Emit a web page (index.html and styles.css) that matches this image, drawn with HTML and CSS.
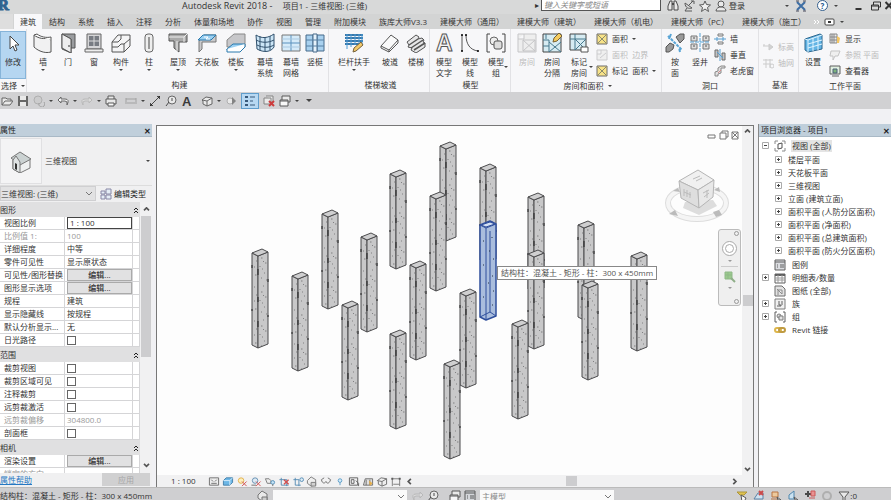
FILE: index.html
```html
<!DOCTYPE html>
<html lang="zh-CN">
<head>
<meta charset="utf-8">
<title>Autodesk Revit 2018 - 项目1 - 三维视图: (三维)</title>
<link rel="stylesheet" href="styles.css">
</head>
<body>
<svg class="sprite" aria-hidden="true">
  <defs>
    <pattern id="speck" width="16" height="34" patternUnits="userSpaceOnUse">
      <rect width="16" height="34" fill="#c8c8c9"/>
      <path d="M2 4h1M11 3h1M9 9h1.500M4 12h1M13 14h1.500M2 18h1M10 20h1M12 24h1M3 26h1.500M9 29h1M14 31h1M11 12l1 1M8 17v1" stroke="#808082" stroke-width="1"/>
    </pattern>
    <g id="col" stroke="#4b4b4d" stroke-linejoin="round">
      <path d="M0 4 6 7V99L0 96Z" fill="url(#speck)"/>
      <path d="M6 7 16 3V95L6 99Z" fill="url(#speck)"/>
      <path d="M0 4 10 0 16 3 6 7Z" fill="#cfcfd0"/>
      <path d="M0 16v3M0 60v2M6 20v6M6 48v5M6 72v6M16 30v3M16 66v2" stroke="#222" stroke-width="1"/>
    </g>
    <symbol id="cursor" viewBox="0 0 20 20"><path d="M7 3v13l3-3 2 5 2-1-2-5h4z" fill="#fff" stroke="#444"/></symbol>
    <symbol id="wall" viewBox="0 0 20 20"><path d="M1 2c5 4 11 4 14 3l3 2v12C11 21 4 17 1 14z" fill="#f1f1f2" stroke="#555"/><path d="M1 2l3-1c4 3 9 4 14 3v3" fill="#fff" stroke="#555"/></symbol>
    <symbol id="door" viewBox="0 0 20 20"><path d="M4 1h13v14h-4M4 1v15l9 4V6z" fill="#9a9c9f" stroke="#555"/><path d="M4 1l9 5v14l-9-5z" fill="#ededee" stroke="#555"/><path d="M11 12v2" stroke="#333"/></symbol>
    <symbol id="window" viewBox="0 0 20 20"><path d="M3 1h14v15H3z" fill="#d5d5d7" stroke="#666"/><path d="M5 3h10v10H5z" fill="#777b82"/><path d="M10 3v10M5 8h10" stroke="#ddd"/><path d="M1 16h18v3H1z" fill="#eee" stroke="#666"/></symbol>
    <symbol id="part" viewBox="0 0 20 20"><path d="M1 9l6-7h12v11l-6 6H1z" fill="#f4f4f5" stroke="#555"/><path d="M1 9h6l3-3V2M13 19v-8h-3l-3 3H1M13 11l6-5" fill="none" stroke="#555"/></symbol>
    <symbol id="pillar" viewBox="0 0 20 20"><rect x="6" y="1" width="8" height="18" rx="3" fill="#eee" stroke="#666"/><path d="M10 4v12" stroke="#999" stroke-width="2"/></symbol>
    <symbol id="roof" viewBox="0 0 20 20"><path d="M1 1h18v8h-8v10l-5-4V8H1z" fill="#aaa" stroke="#555"/><path d="M1 4h15l3-3M16 4v5M9 8v10" fill="none" stroke="#eee"/></symbol>
    <symbol id="ceiling" viewBox="0 0 20 20"><path d="M2 8v11l3-3V9h14V2H7z" fill="#c9c9cb" stroke="#777"/><path d="M1 7l5-5h13l-5 5z" fill="#9bd0f2" stroke="#2879ad"/><path d="M7 4h4l-2 2h4" stroke="#fff" fill="none"/></symbol>
    <symbol id="floor" viewBox="0 0 20 20"><path d="M1 7l7-6h11v13H1z" fill="#c7c7ca" stroke="#888"/><path d="M1 16l6-5h12l-5 6H1z" fill="#9bd0f2" stroke="#2879ad"/><path d="M1 16v3h13l5-5v-3" fill="#fff" stroke="#2879ad"/></symbol>
    <symbol id="curtain" viewBox="0 0 20 20"><path d="M1 2c6 4 12 3 18-1v13c-3 5-10 6-17 2z" fill="#cce6f7" stroke="#31516d"/><path d="M5 3v15M10 4v15M15 3v14M1 7c6 3 12 3 18 0M2 12c6 3 12 3 17 0" fill="none" stroke="#31516d"/></symbol>
    <symbol id="grid" viewBox="0 0 20 20"><path d="M1 2h18v16H1z" fill="#d6ebf9" stroke="#777"/><path d="M10 2v16M1 10h18" stroke="#5a91bd"/><path d="M1 6h18M1 14h18" stroke="#a9c9e2"/></symbol>
    <symbol id="mullion" viewBox="0 0 20 20"><path d="M1 2h7v16H1zM12 2h7v16h-7z" fill="#a9d1ef" stroke="#466b8b"/><path d="M8 1h4v18H8z" fill="#e6f2fb" stroke="#466b8b"/><path d="M1 7h18M1 13h18" stroke="#5680a4" stroke-width="1"/></symbol>
    <symbol id="rail" viewBox="0 0 20 20"><path d="M1 2h18M1 5h18M1 8h18M1 11h14" stroke="#3778ab" stroke-width="2"/><path d="M3 1v15M7 1v13M11 1v11M15 1v10M18 1v10" stroke="#4d9bd5"/><path d="M9 19l1-4 7-6 2 3-7 6z" fill="#f3c969" stroke="#75613c"/></symbol>
    <symbol id="ramp" viewBox="0 0 20 20"><path d="M1 13L11 2l7 5v3L9 19l-8-4z" fill="#fafafa" stroke="#555"/><path d="M1 13l8 4 9-10M9 17v2" fill="none" stroke="#555"/></symbol>
    <symbol id="stair" viewBox="0 0 20 20"><path d="M1 9l9-7 3 2-1 2 4-1 2 2-1 2 2 1v4l-9 6-5-3 1-2-4-1 1-2z" fill="#e6e6e7" stroke="#555"/><path d="M3 12l9-6M5 15l12-8M8 17l11-7" stroke="#555" stroke-width="1.500"/></symbol>
    <symbol id="mtext" viewBox="0 0 20 20"><text x="2" y="18" font-family="Liberation Sans" font-weight="bold" font-size="23" fill="#f4f4f4" stroke="#555">A</text></symbol>
    <symbol id="mline" viewBox="0 0 20 20"><path d="M2 2v16M6 2c0 9 4 15 12 16" fill="none" stroke="#555"/><circle cx="2" cy="2" r="1"/><circle cx="2" cy="18" r="1"/><circle cx="6" cy="2" r="1"/><circle cx="18" cy="18" r="1"/></symbol>
    <symbol id="mgroup" viewBox="0 0 20 20"><path d="M4 1H1v18h3M16 1h3v18h-3" fill="none" stroke="#444"/><circle cx="8" cy="8" r="4" fill="#eee" stroke="#666"/><rect x="8" y="8" width="8" height="8" rx="2" fill="#ddd" stroke="#555"/></symbol>
    <symbol id="room" viewBox="0 0 20 20"><path d="M1 1h18v18H1zM1 6h6V1M6 7h12v11H6zl12 11M18 7L6 18" fill="#eee" stroke="#c5c5c7"/></symbol>
    <symbol id="roomsep" viewBox="0 0 20 20"><path d="M1 1h18v18H1z" fill="#d6ebf2" stroke="#444"/><path d="M1 7h6M4 1v5M1 13h6v6M7 7v6M7 9l12 10M19 9L7 19" fill="none" stroke="#47788d"/><path d="M11 9l1-4 5-5 3 3-5 5z" fill="#f4cb5f" stroke="#776033"/></symbol>
    <symbol id="roomtag" viewBox="0 0 20 20"><path d="M1 1h16v16H1z" fill="#d6ebf2" stroke="#444"/><path d="M1 6h5V1M6 6h11M6 6v11M6 6l11 11M17 6L6 17" fill="none" stroke="#47788d"/><path d="M12 14h7v5h-7z" fill="#fff" stroke="#555"/></symbol>
    <symbol id="area" viewBox="0 0 12 12"><path d="M1 1h10v10H1z" fill="#f8df75" stroke="#555"/><path d="M2 2l8 8M10 2l-8 8" stroke="#775" /></symbol>
    <symbol id="areab" viewBox="0 0 12 12"><path d="M1 1h10v10H1zM1 5h4V1M4 9l6-5" fill="#eee" stroke="#c5c5c7"/></symbol>
    <symbol id="byface" viewBox="0 0 20 20"><path d="M3 3l14 14M6 1l-2 5M15 19l-1-4" stroke="#58a4d5" stroke-width="2" stroke-dasharray="3 1"/><path d="M11 4l4-3h4v5l-4 4zM1 14l4-4 4 2-1 4-4 3H1z" fill="#999" stroke="#555"/></symbol>
    <symbol id="shaft" viewBox="0 0 20 20"><path d="M1 3h6v5H1zM1 11h6v5H1zM13 3h6v5h-6zM13 11h6v5h-6z" fill="#ddd" stroke="#777"/><path d="M3 5h2M3 13h2M15 5h2M15 13h2" stroke="#555"/><path d="M10 0v20M0 9h20" stroke="#56a3d6" stroke-dasharray="4 1"/></symbol>
    <symbol id="owall" viewBox="0 0 12 12"><path d="M4 1h5v2H4zM4 9h5v2H4z" fill="#eee" stroke="#666"/><path d="M0 6h12M3 4v4M9 4v4" stroke="#3b8fc9"/></symbol>
    <symbol id="overt" viewBox="0 0 12 12"><path d="M1 1h3v7H1zM8 4h3v7H8z" fill="#bbb" stroke="#555"/><path d="M6 0v12M3 3l6 6" stroke="#3b8fc9"/></symbol>
    <symbol id="dormer" viewBox="0 0 12 12"><path d="M1 11V7l3-1V3l3-2h4v2H7v5l-3 1v2z" fill="#ddd" stroke="#777"/><path d="M7 5L4 8" stroke="#c77"/></symbol>
    <symbol id="level" viewBox="0 0 12 12"><path d="M1 5h6M7 3l4 3-4 3zM2 3v2" fill="#ccc" stroke="#c5c5c5"/></symbol>
    <symbol id="axis" viewBox="0 0 12 12"><path d="M1 3h10M1 7h8M4 2v9M8 2v9" stroke="#c5c5c5"/><circle cx="10" cy="9" r="2" fill="none" stroke="#c5c5c5"/></symbol>
    <symbol id="setplane" viewBox="0 0 20 20"><path d="M2 6l15-5 2 1v14L5 19l-3-2z" fill="#63b4e4" stroke="#2c668e"/><path d="M5 7l14-5M5 7v12M10 5v13M15 4v13M5 11l14-4M5 15l14-4M2 6l3 1" fill="none" stroke="#e0f4ff"/></symbol>
    <symbol id="show" viewBox="0 0 12 12"><path d="M1 1h7v9H1zM3 1v9M5 1v9M1 4h7M1 7h7" fill="#e9e9e9" stroke="#777"/><path d="M8 3l3 2-1 5H8z" fill="#f3bd48"/></symbol>
    <symbol id="refp" viewBox="0 0 12 12"><path d="M2 2h9L9 7H6l-2 4V7H1z" fill="#eee" stroke="#bbb"/></symbol>
    <symbol id="viewer" viewBox="0 0 12 12"><path d="M1 1h10v8H1zM3 11h7" fill="#dcefdc" stroke="#444"/><path d="M4 8V4h4v4z" fill="#67a866" stroke="#346"/></symbol>
    <symbol id="open" viewBox="0 0 12 12"><path d="M1 10V3h4l1 1h4v2M1 10l3-4h8l-3 4z" fill="#eee" stroke="#555"/></symbol>
    <symbol id="save" viewBox="0 0 12 12"><path d="M1 1h10v10H1z" fill="#555"/><path d="M3 1h6v4H3zM3 7h6v4H3z" fill="#eee"/></symbol>
    <symbol id="sync" viewBox="0 0 12 12"><circle cx="5" cy="5" r="4" fill="#ccc" stroke="#aaa"/><path d="M6 8a3 3 0 105-1" fill="none" stroke="#999"/></symbol>
    <symbol id="undo" viewBox="0 0 12 12"><path d="M4 2L1 5l3 3V6h4q3 0 2 4 3-6-2-6H4z" fill="#fff" stroke="#555"/></symbol>
    <symbol id="redo" viewBox="0 0 12 12"><path d="M8 2l3 3-3 3V6H4q-3 0-2 4-3-6 2-6h4z" fill="#ddd" stroke="#b5b5b5"/></symbol>
    <symbol id="print" viewBox="0 0 12 12"><path d="M3 4V1h6v3M1 4h10v5H1z" fill="#eee" stroke="#444"/><path d="M3 8h6v3H3z" fill="#fff" stroke="#444"/></symbol>
    <symbol id="measure" viewBox="0 0 12 12"><path d="M1 3v6M11 3v6M1 4h10M2 8h8" stroke="#999"/></symbol>
    <symbol id="dim" viewBox="0 0 12 12"><path d="M1 11L11 1M1 8l3 3M8 1l3 3" stroke="#333"/><circle cx="2" cy="10" r="1"/><circle cx="10" cy="2" r="1"/></symbol>
    <symbol id="tag" viewBox="0 0 12 12"><circle cx="7" cy="5" r="4" fill="#eee" stroke="#555"/><path d="M1 11l3-4M7 3v3" stroke="#333"/></symbol>
    <symbol id="atext" viewBox="0 0 12 12"><text x="1" y="11" font-family="Liberation Sans" font-weight="bold" font-size="13" fill="#222">A</text></symbol>
    <symbol id="home" viewBox="0 0 12 12"><path d="M1 5l4-3 6 1v6l-5 2-4-2V6z" fill="#eee" stroke="#555"/><path d="M1 5l5 1 5-3M6 6v5" fill="none" stroke="#555"/></symbol>
    <symbol id="sect" viewBox="0 0 12 12"><circle cx="5" cy="6" r="3" fill="#eee" stroke="#aaa"/><path d="M7 2l4 4-4 4z" fill="#777"/></symbol>
    <symbol id="thin" viewBox="0 0 12 12"><path d="M1 2h3M1 6h3M1 10h3" stroke="#246" stroke-width="2"/><path d="M6 2h5M6 6h3M6 10h5" stroke="#246"/></symbol>
    <symbol id="closeh" viewBox="0 0 12 12"><path d="M1 3h7v6H1zM3 1h7v6" fill="#eee" stroke="#777"/><path d="M6 6l5 5M11 6l-5 5" stroke="#c22" stroke-width="2"/></symbol>
    <symbol id="switch" viewBox="0 0 12 12"><path d="M3 1h8v6H3z" fill="#eee" stroke="#444"/><path d="M1 5h8v6H1zM1 6h8" fill="#fff" stroke="#444"/></symbol>
    <symbol id="bino" viewBox="0 0 12 12"><path d="M1 10V6l2-5h2v9zM7 10V1h2l2 5v4z" fill="#eee" stroke="#333"/><path d="M5 4h2" stroke="#333" stroke-width="2"/></symbol>
    <symbol id="dish" viewBox="0 0 12 12"><path d="M2 3c0 5 4 6 7 5zM4 8l-2 3h7M6 5l4-4M8 1h3v3" fill="none" stroke="#444"/></symbol>
    <symbol id="star" viewBox="0 0 12 12"><path d="M6 1l1.500 3.500 4 .5-3 2.500 1 4L6 9l-3.500 2.500 1-4-3-2.500 4-.5z" fill="#f4f4f4" stroke="#444"/></symbol>
    <symbol id="user" viewBox="0 0 12 12"><circle cx="6" cy="4" r="3" fill="#eee" stroke="#444"/><path d="M1 11c0-3 3-4 5-4s5 1 5 4z" fill="#eee" stroke="#444"/></symbol>
    <symbol id="xch" viewBox="0 0 12 12"><path d="M2 2l8 8M10 2l-8 8" stroke="#235c9b" stroke-width="2"/><path d="M1 1h3M8 1h3M1 11h3M8 11h3" stroke="#334"/></symbol>
    <symbol id="plus" viewBox="0 0 7 7"><path d="M.5.5h6v6h-6z" fill="#fff" stroke="#aaa"/><path d="M2 3.500h3M3.500 2v3" stroke="#444"/></symbol>
    <symbol id="minus" viewBox="0 0 7 7"><path d="M.5.5h6v6h-6z" fill="#fff" stroke="#aaa"/><path d="M2 3.500h3" stroke="#444"/></symbol>
    <symbol id="tviews" viewBox="0 0 12 12"><path d="M1 4V1h3M8 1h3v3M11 8v3H8M4 11H1V8" fill="none" stroke="#777"/><path d="M4 4l4-1v5l-4 1z" fill="#fff" stroke="#333"/></symbol>
    <symbol id="tleg" viewBox="0 0 12 12"><path d="M1 1h10v10H1z" fill="#d5d8dc" stroke="#444"/><path d="M1 3h10M3 6h1M6 6h4M3 8h1M6 8h4" stroke="#444"/></symbol>
    <symbol id="tsched" viewBox="0 0 12 12"><path d="M1 2h10v9H1z" fill="#fff" stroke="#444"/><path d="M1 3h10" stroke="#444" stroke-width="2"/><path d="M1 6h10M1 8h10M4 3v8M8 3v8" stroke="#888"/></symbol>
    <symbol id="tsheet" viewBox="0 0 12 12"><path d="M1 1h7l3 3v7H1z" fill="#ddd" stroke="#555"/><path d="M3 4l5 5V5H4v5" fill="#eee" stroke="#777"/></symbol>
    <symbol id="tfam" viewBox="0 0 12 12"><path d="M1 1h10v10H1z" fill="#eee" stroke="#666"/><path d="M3 8h4V7H5V3M8 3v4" fill="none" stroke="#444"/></symbol>
    <symbol id="tgrp" viewBox="0 0 12 12"><path d="M3 1H1v10h2M9 1h2v10H9" fill="none" stroke="#444"/><circle cx="5" cy="5" r="2" fill="#ddd" stroke="#666"/><path d="M5 5h4v4H5z" fill="#ddd" stroke="#666"/></symbol>
    <symbol id="tlink" viewBox="0 0 12 12"><rect x="1" y="4" width="6" height="4" rx="2" fill="none" stroke="#d8aa2e" stroke-width="2"/><rect x="5" y="4" width="6" height="4" rx="2" fill="none" stroke="#b58a22" stroke-width="2"/></symbol>
    <symbol id="house" viewBox="0 0 24 24"><path d="M4 11v9l7 4 10-5v-8L12 4z" fill="#eef0f0" stroke="#777"/><path d="M2 9l9-6 11 7-11 6z" fill="#cbd2d2" stroke="#777"/><path d="M4 11l3-4 4 6v11l-7-4z" fill="#dfe3e3" stroke="#777"/><path d="M6 14l2 1v6l-2-1z" fill="#333"/></symbol>
    <symbol id="etype" viewBox="0 0 12 12"><path d="M1 3h4v3H1zM6 1h5v5H6zM1 7h4v4H1zM6 7h5v4H6z" fill="#e2edf6" stroke="#779"/></symbol>
    <symbol id="up2" viewBox="0 0 7 8"><path d="M1 4l2-2 2 2M1 7l2-2 2 2" fill="none" stroke="#222"/></symbol>
    <symbol id="vdetail" viewBox="0 0 12 12"><path d="M1 2h10v8H1zM3 4l2 2M9 4L7 6M3 8h6" fill="#eee" stroke="#555"/></symbol>
    <symbol id="vstyle" viewBox="0 0 12 12"><path d="M1 5l3-3h7v5L8 10H1z" fill="#56aee5" stroke="#256b9c"/><path d="M1 5h7v5M8 5l3-3" fill="none" stroke="#d8f0ff"/></symbol>
    <symbol id="vsun" viewBox="0 0 12 12"><circle cx="5" cy="5" r="3" fill="#fff0b5" stroke="#e0a32c"/><path d="M6 6l5 5M11 6l-5 5" stroke="#c33"/></symbol>
    <symbol id="vshadow" viewBox="0 0 12 12"><circle cx="5" cy="5" r="3" fill="#dcebf6" stroke="#4a7da5"/><path d="M1 10h5" stroke="#555"/><path d="M6 6l5 5M11 6l-5 5" stroke="#c33"/></symbol>
    <symbol id="vrender" viewBox="0 0 12 12"><path d="M1 3h4l2 2v3H3z" fill="#eee" stroke="#666"/><circle cx="9" cy="7" r="2" fill="#bde0f6" stroke="#397fae"/><path d="M9 9v2" stroke="#555"/></symbol>
    <symbol id="vcropx" viewBox="0 0 12 12"><path d="M3 2v8h8M1 4h8v7" fill="none" stroke="#397aa8"/><path d="M6 4l5 5M11 4l-5 5" stroke="#c33" stroke-width="1.500"/></symbol>
    <symbol id="vcrop" viewBox="0 0 12 12"><path d="M3 2v8h6M1 4h6v7" fill="none" stroke="#397aa8"/><circle cx="10" cy="4" r="2" fill="#d9ecf8" stroke="#397aa8"/></symbol>
    <symbol id="vlock" viewBox="0 0 12 12"><path d="M1 5l4-4 5 3v6l-5 1-4-3z" fill="#eee" stroke="#666"/><path d="M5 7h5v4H5z" fill="#ccc" stroke="#666"/></symbol>
    <symbol id="vhide" viewBox="0 0 12 12"><path d="M1 4c1 5 4 4 5 2 1 3 4 2 5-2M1 4l3-2M11 4L8 2" fill="none" stroke="#555"/></symbol>
    <symbol id="vbulb" viewBox="0 0 12 12"><circle cx="6" cy="5" r="2" fill="#d3ecfb" stroke="#3d8cc1"/><path d="M6 7v3" stroke="#3d8cc1"/></symbol>
    <symbol id="vtemp" viewBox="0 0 12 12"><path d="M1 2h9v8H1zM3 4h3v4H3zM8 5l3 3v3" fill="none" stroke="#444"/></symbol>
    <symbol id="vanal" viewBox="0 0 12 12"><path d="M1 10l2-7h8v7zM4 4v6M8 4v6" fill="#ddd" stroke="#555"/><path d="M7 5l4 3-3 3z" fill="#e7a52e"/></symbol>
    <symbol id="vcons" viewBox="0 0 12 12"><path d="M2 3v8M10 3v8M1 3h10M3 9h7" stroke="#666" fill="none"/><path d="M1 2h2v2H1zM9 2h2v2H9z" fill="#444"/></symbol>
    <symbol id="shand" viewBox="0 0 12 12"><path d="M1 2h10L8 5H4z" fill="#e4c33b" stroke="#a78a21"/><path d="M5 5l5 3-2 4H6z" fill="#fff" stroke="#444"/></symbol>
    <symbol id="slink" viewBox="0 0 12 12"><path d="M1 9l4-6h5v6z" fill="#cfe5f5" stroke="#4977a0"/><path d="M6 1l4 4M10 1L6 5" stroke="#c33" stroke-width="2"/></symbol>
    <symbol id="spin" viewBox="0 0 12 12"><path d="M2 2h6v5H2zM1 9h8" fill="#f3c993" stroke="#b5652a"/><path d="M7 7l4 3H8z" fill="#fff" stroke="#444"/></symbol>
    <symbol id="sface" viewBox="0 0 12 12"><path d="M2 9V5l5-4v8z" fill="#cbe6f7" stroke="#397aa8"/><path d="M7 7l4 3H8z" fill="#fff" stroke="#444"/></symbol>
    <symbol id="sdrag" viewBox="0 0 12 12"><path d="M1 4h6M4 1v6" stroke="#333" stroke-width="2"/><path d="M7 1h4v5H7zM5 8h6" stroke="#c44" fill="#e88"/></symbol>
    <symbol id="sgear" viewBox="0 0 12 12"><circle cx="6" cy="6" r="4" fill="none" stroke="#aaa" stroke-width="2"/></symbol>
    <symbol id="sfilter" viewBox="0 0 12 12"><path d="M1 2h10L7 7v4H5V7z" fill="#eee" stroke="#444"/></symbol>
  </defs>
</svg>

<header class="titlebar">
  <svg class="logo" viewBox="0 0 12 13" aria-label="Revit"><text x="-2" y="10" font-family="Liberation Serif" font-weight="bold" font-size="15" fill="#2f6290" stroke="#2f6290">R</text></svg>
  <h1 class="app-title">Autodesk Revit 2018 - <span>项目1 - 三维视图: (三维)</span></h1>
  <span class="title-arrow">▸</span>
  <input class="search" type="text" placeholder="键入关键字或短语" aria-label="搜索">
  <div class="account">
    <svg class="i12"><use href="#bino"/></svg><svg class="i12"><use href="#dish"/></svg><svg class="i12"><use href="#star"/></svg><svg class="i12"><use href="#user"/></svg>
    <button class="plain">登录</button>
  </div>
  <div class="helpers"><i class="caret"></i><svg class="i12"><use href="#xch"/></svg><button class="help" aria-label="帮助">?</button><i class="caret"></i></div>
  <div class="wincontrols"><svg viewBox="0 0 36 12"><path d="M1 9h6" stroke="#333" stroke-width="2"/><path d="M17 5h7v5h-7zM19 5V2h7v5h-2M17 6h7" fill="none" stroke="#333"/><path d="M31 2l7 7M38 2l-7 7" stroke="#333" stroke-width="2"/></svg></div>
</header>

<nav class="tabs">
  <button class="tab file" aria-label="文件"></button>
  <button class="tab active">建筑</button><button class="tab">结构</button><button class="tab">系统</button><button class="tab">插入</button><button class="tab">注释</button><button class="tab">分析</button><button class="tab">体量和场地</button><button class="tab">协作</button><button class="tab">视图</button><button class="tab">管理</button><button class="tab">附加模块</button><button class="tab">族库大师V3.3</button><button class="tab">建模大师（通用）</button><button class="tab">建模大师（建筑）</button><button class="tab">建模大师（机电）</button><button class="tab">建模大师（PC）</button><button class="tab">建模大师（施工）</button>
  <svg class="tabend" viewBox="0 0 26 10"><path d="M1 3l2 2-2 2M4 3l2 2-2 2" fill="none" stroke="#fff"/><rect x="12" y="2" width="9" height="6" rx="1" fill="#fff" stroke="#444"/><path d="M15 5h3" stroke="#333" stroke-width="2"/></svg><i class="caret"></i>
</nav>

<section class="ribbon">
  <div class="group g-select">
    <div class="tools"><button class="tool t24 selected"><svg><use href="#cursor"/></svg>修改</button></div>
    <div class="gname">选择 <i class="caret"></i></div>
  </div>
  <div class="group g-build">
    <div class="tools">
      <button class="tool t24"><svg><use href="#wall"/></svg>墙<i class="caret"></i></button>
      <button class="tool t26"><svg><use href="#door"/></svg>门</button>
      <button class="tool t26"><svg><use href="#window"/></svg>窗</button>
      <button class="tool t28"><svg><use href="#part"/></svg>构件<i class="caret"></i></button>
      <button class="tool t28"><svg><use href="#pillar"/></svg>柱<i class="caret"></i></button>
      <button class="tool t30"><svg><use href="#roof"/></svg>屋顶<i class="caret"></i></button>
      <button class="tool t28"><svg><use href="#ceiling"/></svg>天花板</button>
      <button class="tool t30"><svg><use href="#floor"/></svg>楼板<i class="caret"></i></button>
      <button class="tool t28"><svg><use href="#curtain"/></svg>幕墙<br>系统</button>
      <button class="tool t24"><svg><use href="#grid"/></svg>幕墙<br>网格</button>
      <button class="tool t24"><svg><use href="#mullion"/></svg>竖梃</button>
    </div>
    <div class="gname">构建</div>
  </div>
  <div class="group g-stair">
    <div class="tools">
      <button class="tool t44"><svg><use href="#rail"/></svg>栏杆扶手<i class="caret"></i></button>
      <button class="tool t28"><svg><use href="#ramp"/></svg>坡道</button>
      <button class="tool t24"><svg><use href="#stair"/></svg>楼梯</button>
    </div>
    <div class="gname">楼梯坡道</div>
  </div>
  <div class="group g-model">
    <div class="tools">
      <button class="tool t26"><svg><use href="#mtext"/></svg>模型<br>文字</button>
      <button class="tool t26"><svg><use href="#mline"/></svg>模型<br>线</button>
      <button class="tool t26 side"><svg><use href="#mgroup"/></svg>模型<br>组<i class="caret"></i></button>
    </div>
    <div class="gname">模型</div>
  </div>
  <div class="group g-room">
    <div class="tools">
      <button class="tool t26" disabled><svg><use href="#room"/></svg>房间</button>
      <button class="tool t24"><svg><use href="#roomsep"/></svg>房间<br>分隔</button>
      <button class="tool t30 side"><svg><use href="#roomtag"/></svg>标记<br>房间<i class="caret"></i></button>
      <div class="stack">
        <button><svg class="i12"><use href="#area"/></svg>面积 <i class="caret"></i></button>
        <button disabled><svg class="i12"><use href="#areab"/></svg>面积&nbsp; 边界</button>
        <button><svg class="i12"><use href="#area"/></svg>标记&nbsp; 面积 <i class="caret"></i></button>
      </div>
    </div>
    <div class="gname">房间和面积 <i class="caret"></i></div>
  </div>
  <div class="group g-open">
    <div class="tools">
      <button class="tool t26"><svg><use href="#byface"/></svg>按<br>面</button>
      <button class="tool t24"><svg><use href="#shaft"/></svg>竖井</button>
      <div class="stack">
        <button><svg class="i12"><use href="#owall"/></svg>墙</button>
        <button><svg class="i12"><use href="#overt"/></svg>垂直</button>
        <button><svg class="i12"><use href="#dormer"/></svg>老虎窗</button>
      </div>
    </div>
    <div class="gname">洞口</div>
  </div>
  <div class="group g-datum">
    <div class="tools"><div class="stack middle">
      <button disabled><svg class="i12"><use href="#level"/></svg>标高</button>
      <button disabled><svg class="i12"><use href="#axis"/></svg>轴网</button>
    </div></div>
    <div class="gname">基准</div>
  </div>
  <div class="group g-plane">
    <div class="tools">
      <button class="tool t28"><svg><use href="#setplane"/></svg>设置</button>
      <div class="stack">
        <button><svg class="i12"><use href="#show"/></svg>显示</button>
        <button disabled><svg class="i12"><use href="#refp"/></svg>参照 平面</button>
        <button><svg class="i12"><use href="#viewer"/></svg>查看器</button>
      </div>
    </div>
    <div class="gname">工作平面</div>
  </div>
</section>

<div class="qat">
  <svg class="i12"><use href="#open"/></svg><svg class="i12"><use href="#save"/></svg><svg class="i12"><use href="#sync"/></svg><i class="caret"></i>
  <svg class="i12"><use href="#undo"/></svg><i class="caret"></i><svg class="i12"><use href="#redo"/></svg><i class="caret"></i>
  <svg class="i12"><use href="#print"/></svg><svg class="i12 wide"><use href="#measure"/></svg><i class="caret"></i>
  <svg class="i12"><use href="#dim"/></svg><svg class="i12"><use href="#tag"/></svg><svg class="i12"><use href="#atext"/></svg><svg class="i12 wide"><use href="#home"/></svg><i class="caret"></i>
  <svg class="i12"><use href="#sect"/></svg><span class="on"><svg class="i12"><use href="#thin"/></svg></span><svg class="i12"><use href="#closeh"/></svg><svg class="i12"><use href="#switch"/></svg><i class="caret"></i><i class="caret big"></i>
</div>

<main class="work">
  <aside class="props">
    <div class="phead">属性<button class="x" aria-label="关闭">✕</button></div>
    <div class="ptype"><span class="thumb"><svg><use href="#house"/></svg></span><span>三维视图</span><i class="caret"></i></div>
    <div class="pselect">
      <select aria-label="视图"><option>三维视图: (三维)</option></select>
      <button><svg class="i12"><use href="#etype"/></svg>编辑类型</button>
    </div>
    <div class="pgrid">
      <div class="ptable">
      <table>
        <colgroup><col><col class="cv"><col class="ce"></colgroup>
        <tbody>
        <tr class="sec"><th colspan="2">图形</th><th><svg><use href="#up2"/></svg></th></tr>
        <tr><td><label for="sc">视图比例</label></td><td><input id="sc" class="field" type="text" value="1 : 100"></td><td></td></tr>
        <tr class="dim"><td>比例值 1:</td><td>100</td><td></td></tr>
        <tr><td>详细程度</td><td>中等</td><td></td></tr>
        <tr><td>零件可见性</td><td>显示原状态</td><td></td></tr>
        <tr><td>可见性/图形替换</td><td><button class="edit">编辑...</button></td><td></td></tr>
        <tr><td>图形显示选项</td><td><button class="edit">编辑...</button></td><td></td></tr>
        <tr><td>规程</td><td>建筑</td><td></td></tr>
        <tr><td>显示隐藏线</td><td>按规程</td><td></td></tr>
        <tr><td>默认分析显示...</td><td>无</td><td></td></tr>
        <tr><td><label for="c1">日光路径</label></td><td><input id="c1" type="checkbox"></td><td></td></tr>
        <tr class="sec"><th colspan="2">范围</th><th><svg><use href="#up2"/></svg></th></tr>
        <tr><td><label for="c2">裁剪视图</label></td><td><input id="c2" type="checkbox"></td><td></td></tr>
        <tr><td><label for="c3">裁剪区域可见</label></td><td><input id="c3" type="checkbox"></td><td></td></tr>
        <tr><td><label for="c4">注释裁剪</label></td><td><input id="c4" type="checkbox"></td><td></td></tr>
        <tr><td><label for="c5">远剪裁激活</label></td><td><input id="c5" type="checkbox"></td><td></td></tr>
        <tr class="dim"><td>远剪裁偏移</td><td>304800.0</td><td></td></tr>
        <tr><td><label for="c6">剖面框</label></td><td><input id="c6" type="checkbox"></td><td></td></tr>
        <tr class="sec"><th colspan="2">相机</th><th><svg><use href="#up2"/></svg></th></tr>
        <tr><td>渲染设置</td><td><button class="edit">编辑...</button></td><td></td></tr>
        <tr class="dim"><td>锁定的方向</td><td></td><td></td></tr>
        </tbody>
      </table>
      </div>
      <div class="vscroll"><svg viewBox="0 0 8 6"><path d="M1 4l3-3 3 3" /></svg><span class="thumb-props"></span><svg viewBox="0 0 8 6"><path d="M1 1l3 3 3-3"/></svg></div>
    </div>
    <div class="pfoot"><a href="#help">属性帮助</a><button disabled>应用</button></div>
  </aside>

  <section class="view">
    <div class="stage">
      <div class="canvas">
        <svg class="model" role="img" aria-label="结构柱三维模型">
          <g transform="translate(-157 -126)">
            <use href="#col" x="440" y="142"/><use href="#col" x="390" y="170"/><use href="#col" x="480" y="164"/><use href="#col" x="430" y="192"/>
            <use href="#col" x="322" y="210"/><use href="#col" x="361" y="233"/><use href="#col" x="252" y="249"/><use href="#col" x="292" y="272"/>
            <use href="#col" x="410" y="261"/><use href="#col" x="528" y="193"/><use href="#col" x="578" y="221"/><use href="#col" x="631" y="252"/>
            <use href="#col" x="528" y="250"/><use href="#col" x="582" y="281"/><use href="#col" x="460" y="289"/><use href="#col" x="512" y="320"/>
            <use href="#col" x="342" y="301"/><use href="#col" x="390" y="330"/><use href="#col" x="444" y="360"/>
            <g transform="translate(480 221)" stroke="#2f4f9c" stroke-linejoin="round">
              <path d="M0 4 10 0 16 3V95L6 99 0 96Z" fill="#a9bddd" stroke-width="1.500"/>
              <path d="M0 4 6 7 16 3M6 7V99M10 10V91M0 96 10 91 16 95" fill="none"/>
              <path d="M1 4 10 1 15 3 6 6Z" fill="#d3e0f4"/>
              <path d="M3 20h1M12 16v1M9 30h1M13 38h1M3 44h1M12 55h1M8 62h1M13 70h1M3 76h1M12 84h1" stroke="#234"/>
            </g>
          </g>
        </svg>
        <svg class="viewctl" viewBox="0 0 32 10"><path d="M1 5h7v3H1zM13 3h6v6h-6zM15 3V1h6v6h-2M25 2l6 6M31 2l-6 6M25 2h6v7h-6z" fill="none" stroke="#777"/></svg>
        <svg class="cube" viewBox="0 0 70 60">
          <ellipse cx="34" cy="37" rx="29" ry="16" fill="none" stroke="#ddd" stroke-width="6"/><ellipse cx="34" cy="37" rx="29" ry="16" fill="none" stroke="#f5f5f5" stroke-width="4"/>
          <path d="M10 25l5-3 2 4zM51 24l5-3 1 5zM6 48l6-4 3 6zM50 46l6-2 3 5-6 2z" fill="#bbb"/>
          <path d="M20 42l16 7 18-9-4-6-28 2z" fill="#ddd"/>
          <path d="M16 15 35 4 51 14 35 24Z" fill="#f0f0f0" stroke="#b5b5b5"/><path d="M16 15 35 24 36 42 18 32Z" fill="#dedede" stroke="#b5b5b5"/><path d="M35 24 51 14 50 31 36 42Z" fill="#e8e8e8" stroke="#b5b5b5"/>
          <path d="M30 13l7-3M33 15l6-3M21 23v7M24 24v7M27 26v6M21 26l7 3M40 27l6-3M41 31l5-4M44 24v8" stroke="#bbb"/>
        </svg>
        <div class="navbar"><i class="dot"></i><i class="wheel"></i><i class="caret"></i><hr><svg viewBox="0 0 12 12"><path d="M1 1h7v7H1zM1 4h7M4 1v7" fill="#9bc98e" stroke="#8fb987"/><path d="M7 7l4 4" stroke="#8fae88" stroke-width="2"/></svg><i class="caret"></i><i class="dot last"></i></div>
        <div class="tip" role="tooltip">结构柱：混凝土 - 矩形 - 柱：300 x 450mm</div>
      </div>
      <div class="vscroll main"><svg viewBox="0 0 8 6"><path d="M1 4l3-3 3 3"/></svg><span class="thumb-view"></span><svg viewBox="0 0 8 6"><path d="M1 1l3 3 3-3"/></svg></div>
    </div>
    <div class="viewbar">
      <span class="scale">1 : 100</span>
      <svg class="i12"><use href="#vdetail"/></svg><svg class="i12"><use href="#vstyle"/></svg><svg class="i12"><use href="#vsun"/></svg><svg class="i12"><use href="#vshadow"/></svg><svg class="i12"><use href="#vrender"/></svg><svg class="i12"><use href="#vcropx"/></svg><svg class="i12"><use href="#vcrop"/></svg><svg class="i12"><use href="#vlock"/></svg><svg class="i12"><use href="#vhide"/></svg><svg class="i12"><use href="#vbulb"/></svg><svg class="i12"><use href="#vtemp"/></svg><svg class="i12"><use href="#vanal"/></svg><svg class="i12"><use href="#home"/></svg><svg class="i12"><use href="#vcons"/></svg>
      <svg class="chev" viewBox="0 0 6 8"><path d="M4 1L1 4l3 3"/></svg>
      <span class="hscroll"><i></i></span>
      <svg class="chev" viewBox="0 0 6 8"><path d="M1 1l3 3-3 3"/></svg>
    </div>
  </section>

  <aside class="browser">
    <div class="phead">项目浏览器 - 项目1<button class="x" aria-label="关闭">✕</button></div>
    <ul class="tree">
      <li><div class="node"><svg class="pm"><use href="#minus"/></svg><svg class="i12"><use href="#tviews"/></svg><span class="cur">视图 (全部)</span></div>
        <ul>
          <li class="node"><svg class="pm"><use href="#plus"/></svg>楼层平面</li>
          <li class="node"><svg class="pm"><use href="#plus"/></svg>天花板平面</li>
          <li class="node"><svg class="pm"><use href="#plus"/></svg>三维视图</li>
          <li class="node"><svg class="pm"><use href="#plus"/></svg>立面 (建筑立面)</li>
          <li class="node"><svg class="pm"><use href="#plus"/></svg>面积平面 (人防分区面积)</li>
          <li class="node"><svg class="pm"><use href="#plus"/></svg>面积平面 (净面积)</li>
          <li class="node"><svg class="pm"><use href="#plus"/></svg>面积平面 (总建筑面积)</li>
          <li class="node"><svg class="pm"><use href="#plus"/></svg>面积平面 (防火分区面积)</li>
        </ul>
      </li>
      <li class="node"><span class="pm"></span><svg class="i12"><use href="#tleg"/></svg><span>图例</span></li>
      <li class="node"><svg class="pm"><use href="#plus"/></svg><svg class="i12"><use href="#tsched"/></svg><span>明细表/数量</span></li>
      <li class="node"><span class="pm"></span><svg class="i12"><use href="#tsheet"/></svg><span>图纸 (全部)</span></li>
      <li class="node"><svg class="pm"><use href="#plus"/></svg><svg class="i12"><use href="#tfam"/></svg><span>族</span></li>
      <li class="node"><svg class="pm"><use href="#plus"/></svg><svg class="i12"><use href="#tgrp"/></svg><span>组</span></li>
      <li class="node"><span class="pm"></span><svg class="i12"><use href="#tlink"/></svg><span>Revit 链接</span></li>
    </ul>
  </aside>
</main>

<footer class="status">
  <span class="msg">结构柱：混凝土 - 矩形 - 柱：300 x 450mm</span>
  <svg class="i12"><use href="#vlock"/></svg>
  <select aria-label="工作集"><option></option></select>
  <div class="sicons"><svg class="i12"><use href="#redo"/></svg><svg class="i12"><use href="#tag"/></svg></div>
  <div class="sicons"><svg class="i12"><use href="#switch"/></svg><svg class="i12"><use href="#tleg"/></svg></div>
  <select aria-label="设计选项"><option>主模型</option></select>
  <div class="sright"><svg class="i12"><use href="#shand"/></svg><svg class="i12"><use href="#slink"/></svg><svg class="i12"><use href="#spin"/></svg><svg class="i12"><use href="#sface"/></svg><svg class="i12"><use href="#sdrag"/></svg><svg class="i12"><use href="#sgear"/></svg><span class="filter"><svg class="i12"><use href="#sfilter"/></svg>:0</span></div>
</footer>
</body>
</html>
```
FILE: styles.css
```css
* { box-sizing: border-box; }

body {
  margin: 0;
  height: 100vh;
  display: flex;
  flex-direction: column;
  overflow: hidden;
  background: #f1f1f4;
  color: #333;
  font: 8px/12px "Open Sans", "Noto Sans CJK SC", sans-serif;
  white-space: nowrap;
}

button, input, select { font: inherit; color: inherit; margin: 0; padding: 0; border: 0; background: none; border-radius: 0; }
svg { display: block; flex: none; }
ul { list-style: none; margin: 0; padding: 0; }
.sprite { position: absolute; width: 0; height: 0; }
.i12 { width: 12px; height: 12px; opacity: .85; }
.caret { flex: none; display: inline-block; width: 0; height: 0; border: 2px solid transparent; border-top-color: #444; border-bottom: 0; }
select {
  appearance: none;
  background: #fafafa url("data:image/svg+xml,%3Csvg xmlns='http://www.w3.org/2000/svg' width='8' height='6'%3E%3Cpath d='M1 1l3 3 3-3' fill='none' stroke='%23777'/%3E%3C/svg%3E") no-repeat right 2px center;
}

/* Title bar */
.titlebar { flex: none; height: 14px; display: flex; align-items: flex-start; background: #d8d9d9; overflow: hidden; }
.logo { width: 12px; height: 13px; }
.app-title { margin: 0 0 0 170px; font-size: 9px; font-weight: 400; line-height: 11px; }
.app-title span { margin-left: 8px; font-size: 8px; }
.title-arrow { margin-left: auto; line-height: 10px; }
.search { width: 120px; height: 12px; margin: -1px 6px 0 2px; padding: 0 2px; background: #fff; border: 1px solid #555; }
.search::placeholder { color: #888; font-style: italic; }
.account { display: flex; gap: 4px; height: 11px; line-height: 11px; }
.account .plain { margin-left: -2px; }
.helpers { display: flex; align-items: center; gap: 6px; height: 11px; margin-left: 40px; }
.help { width: 11px; height: 11px; margin-left: 4px; border: 1px solid #345f8e; border-radius: 50%; background: #fff; color: #24588e; font-weight: 700; line-height: 9px; }
.wincontrols { margin-left: 16px; }
.wincontrols svg { width: 37px; height: 12px; }

/* Ribbon tabs */
.tabs { flex: none; height: 15px; display: flex; gap: 1px; align-items: center; background: #d3d4d4; }
.tab { height: 15px; padding: 0 6px; line-height: 15px; }
.tab.file { width: 13px; padding: 0; background: #dedede; }
.tab.active { background: #f8f8fa; }
.tabend { width: 26px; height: 10px; }

/* Ribbon */
.ribbon { flex: none; height: 63px; display: flex; background: #f7f7f9; overflow: hidden; }
.group { display: flex; flex-direction: column; flex: none; border-right: 1px solid #e2e2e5; }
.tools { flex: 1; display: flex; align-items: flex-start; }
.gname { height: 14px; line-height: 13px; text-align: center; }
.gname .caret { margin: 0 0 2px 2px; }
.g-select { width: 27px; }
.g-build { width: 302px; padding-left: 4px; }
.g-stair { width: 101px; padding-left: 3px; }
.g-model { width: 81px; padding-left: 1px; }
.g-room { width: 151px; padding-left: 3px; }
.g-open { width: 97px; }
.g-datum { width: 40px; padding-left: 3px; }
.g-plane { flex: 1 0 auto; border: 0; }
.tool { position: relative; padding-top: 4px; line-height: 11px; text-align: center; }
.tool svg { width: 20px; height: 20px; margin: 0 auto 3px; }
.tool .caret { position: absolute; left: calc(50% - 2px); top: 40px; }
.tool.side .caret { left: auto; right: 1px; top: 37px; }
.t24 { width: 24px; }
.t26 { width: 26px; }
.t28 { width: 28px; }
.t30 { width: 30px; }
.t44 { width: 44px; }
.selected { width: 26px; margin-top: 2px; padding: 1px 0 11px; background: #b5d6f1; border: 1px solid #86b4d9; }
button:disabled { color: #bbb; }
.stack { display: flex; flex-direction: column; padding: 2px 0 0 2px; }
.stack.middle { padding: 10px 0 0; }
.stack button { display: flex; align-items: center; gap: 4px; height: 16px; }

/* Quick access toolbar */
.qat { flex: none; height: 17px; margin-bottom: 16px; padding-left: 1px; display: flex; align-items: center; gap: 4px; background: #d1d1d3; }
.qat .wide { margin-left: 4px; }
.qat .on { padding: 1px 2px; background: #b7d8f2; border: 1px solid #5f9dcc; }
.qat .caret.big { border-width: 3px 3px 0; margin-left: 3px; }

/* Workspace */
.work { flex: 1; min-height: 0; display: flex; gap: 4px; }
.phead { flex: none; height: 13px; display: flex; justify-content: space-between; align-items: center; background: #c0cfdb; color: #222; border-bottom: 1px solid #a9b9c6; }
.x { width: 10px; line-height: 11px; font-weight: 700; }

/* Properties palette */
.props { flex: none; width: 152px; margin-top: -1px; display: flex; flex-direction: column; background: #f0f0f1; }
.ptype { flex: none; height: 49px; display: flex; align-items: center; gap: 3px; padding-right: 2px; border-bottom: 1px solid #ddd; }
.ptype .thumb { width: 42px; height: 46px; display: grid; place-items: center; background: #f4f4f5; border: 1px solid #e0e0e2; }
.ptype .thumb svg { width: 24px; height: 24px; }
.ptype .caret { margin-left: auto; }
.pselect { flex: none; height: 16px; display: flex; gap: 4px; }
.pselect select { width: 96px; height: 15px; background-color: #e2e2e3; border: 1px solid #cfcfd1; }
.pselect button { display: flex; align-items: center; gap: 2px; color: #222; }
.pgrid { flex: 1; min-height: 0; display: flex; }
.ptable { flex: 1; min-width: 0; overflow: hidden; background: #fff; }
table { width: 100%; table-layout: fixed; border-collapse: separate; border-spacing: 0; }
.cv { width: 68px; }
.ce { width: 7px; }
td { height: 13px; padding: 0 0 0 2px; line-height: 12px; border-bottom: 1px solid #d5d5d7; border-right: 1px solid #d5d5d7; overflow: hidden; }
td:first-child { padding-left: 4px; }
.dim { color: #999; }
.sec th { height: 15px; padding: 0; background: #e0e0e1; text-align: left; font-weight: 400; line-height: 14px; }
.sec svg { width: 7px; height: 8px; }
.field { display: block; width: 100%; height: 12px; padding-left: 2px; border: 1px solid #444; background: #fff; }
.edit { display: block; width: 100%; height: 12px; line-height: 10px; background: #e1e1e2; border: 1px solid #aaa; font-weight: 500; }
input[type="checkbox"] { appearance: none; display: block; width: 9px; height: 9px; border: 1px solid #666; background: #fff; }
.vscroll { flex: none; width: 12px; display: flex; flex-direction: column; align-items: center; padding: 5px 0; background: #f1f1f2; }
.vscroll svg { width: 7px; height: 5px; }
.vscroll path, .chev path { fill: none; stroke: #555; stroke-width: 2; }
.vscroll span { background: #cdcdcf; }
.thumb-props { width: 10px; height: 54%; margin: 4px 0 auto; }
.pfoot { flex: none; height: 14px; display: flex; justify-content: space-between; padding-right: 2px; }
.pfoot a { color: #2678c2; line-height: 14px; }
.pfoot button { width: 48px; height: 13px; background: #d0d0d1; color: #a5a5a6; }

/* Drawing view */
.view { flex: 1; min-width: 0; display: flex; flex-direction: column; background: #fdfdfd; border: 1px solid #777; border-bottom: 0; }
.stage { flex: 1; min-height: 0; display: flex; }
.canvas { position: relative; flex: 1; min-width: 0; overflow: hidden; }
.model { width: 100%; height: 100%; }
.vscroll.main { width: 11px; padding: 3px 0; }
.thumb-view { width: 10px; height: 11px; margin: auto 0; }
.viewctl { position: absolute; top: 4px; right: 3px; width: 32px; height: 10px; }
.cube { position: absolute; top: 40px; right: 9px; width: 70px; height: 60px; }
.navbar { position: absolute; top: 103px; right: 1px; width: 23px; height: 77px; display: flex; flex-direction: column; align-items: center; gap: 4px; background: #efefef; border: 1px solid #bbb; border-radius: 3px; }
.navbar .caret { border-top-color: #999; }
.navbar hr { width: 17px; height: 1px; margin: 0; border: 0; background: #ccc; }
.navbar svg { width: 12px; height: 12px; }
.dot { align-self: flex-end; width: 5px; height: 5px; margin: 1px; border: 1px solid #999; border-radius: 50%; }
.dot.last { margin-top: auto; }
.wheel { width: 15px; height: 15px; border: 4px double #aaa; border-radius: 50%; background: #fff; }
.tip { position: absolute; left: 340px; top: 140px; padding: 0 3px; background: #fff; border: 1px solid #888; color: #555; }
.viewbar { flex: none; height: 12px; display: flex; align-items: center; gap: 2px; padding: 0 15px 0 14px; background: #f1f1f2; }
.viewbar .i12 { height: 11px; }
.scale { width: 35px; }
.chev { width: 6px; height: 7px; margin-left: 3px; }
.hscroll { flex: 1; height: 10px; display: flex; justify-content: center; }
.hscroll i { width: 11px; background: #cdcdcf; }

/* Project browser */
.browser { flex: none; width: 133px; margin-top: -1px; background: #fff; border-left: 1px solid #888; }
.browser .phead { padding-left: 2px; }
.tree { padding: 2px 0 0 3px; }
.tree ul { margin: 1px 0; padding-left: 13px; }
.node { display: flex; align-items: center; gap: 5px; height: 13px; }
.pm { flex: none; width: 7px; height: 7px; }
.tree .node > span:last-child { padding: 0 1px; }
.tree ul .node { gap: 6px; }
.cur { background: #e4e4e4; }

/* Status bar */
.status { flex: none; height: 13px; display: flex; align-items: flex-start; padding-top: 2px; overflow: hidden; background: #cfcfd1; border-top: 1px solid #bbb; }
.msg { width: 257px; line-height: 12px; }
.status select { width: 134px; height: 13px; margin-left: 4px; padding-left: 2px; color: #888; }
.sicons { display: flex; gap: 3px; margin-left: 5px; }
.sicons + .sicons { margin-left: 10px; }
.sright { display: flex; gap: 5px; margin-left: auto; margin-right: 34px; }
.filter { display: flex; }
```
